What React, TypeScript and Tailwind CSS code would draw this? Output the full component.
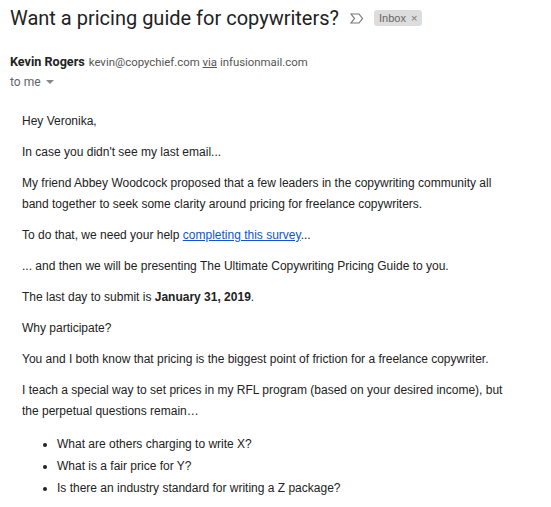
import React from "react";

const ImportantMarker: React.FC = () => (
  <svg width="14" height="11" viewBox="0 0 14 11" className="shrink-0">
    <path
      d="M1 1 H9 L12.5 5.5 L9 10 H1 L4.5 5.5 Z"
      fill="none"
      stroke="#777"
      strokeWidth="1.2"
      strokeLinejoin="miter"
    />
  </svg>
);

const App: React.FC = () => {
  return (
    <div className="w-[551px] h-[507px] bg-white overflow-hidden text-[#222]">
      {/* subject line */}
      <div className="flex items-center pl-[10px] h-[36px]">
        <h1 className="text-[20px] leading-[28px] text-[#222] font-['Roboto',sans-serif]">
          Want a pricing guide for copywriters?
        </h1>
        <div className="ml-[11px] mt-[1px]">
          <ImportantMarker />
        </div>
        <span className="ml-[10px] flex items-center gap-[5px] rounded-[3px] bg-[#ddd] px-[5px] h-[16px] text-[11px] text-[#666] font-['Liberation_Sans',Arial,sans-serif]">
          Inbox
          <span className="text-[11px] leading-none text-[#777]">×</span>
        </span>
      </div>

      {/* sender */}
      <div className="pl-[10px] pt-[18px] font-['Roboto',sans-serif]">
        <div className="flex items-baseline gap-[4px] text-[11.4px] leading-[16px]">
          <span className="text-[12.6px] font-bold text-[#222]">Kevin Rogers</span>
          <span className="text-[#555]">
            kevin@copychief.com <span className="underline">via</span> infusionmail.com
          </span>
        </div>
        <div className="mt-[2px] flex items-center gap-[5px] text-[12px] leading-[20px] text-[#5f6368]">
          to me
          <svg width="8" height="4" viewBox="0 0 8 4">
            <path d="M0 0 H8 L4 4 Z" fill="#888" />
          </svg>
        </div>
      </div>

      {/* body */}
      <div className="pl-[22px] pr-[42px] pt-[19px] text-[12px] leading-[21px] text-[#222] font-['Liberation_Sans',Arial,sans-serif] flex flex-col gap-[10px]">
        <p>Hey Veronika,</p>
        <p>In case you didn't see my last email...</p>
        <p>
          My friend Abbey Woodcock proposed that a few leaders in the copywriting community all band
          together to seek some clarity around pricing for freelance copywriters.
        </p>
        <p>
          To do that, we need your help{" "}
          <a href="#" className="text-[#15c] underline">
            completing this survey
          </a>
          ...
        </p>
        <p>... and then we will be presenting The Ultimate Copywriting Pricing Guide to you.</p>
        <p>
          The last day to submit is <b>January 31, 2019</b>.
        </p>
        <p>Why participate?</p>
        <p>You and I both know that pricing is the biggest point of friction for a freelance copywriter.</p>
        <p>
          I teach a special way to set prices in my RFL program (based on your desired income), but the
          perpetual questions remain…
        </p>
        <ul className="list-disc pl-[35px] pt-[1px] leading-[22px]">
          <li>What are others charging to write X?</li>
          <li>What is a fair price for Y?</li>
          <li>Is there an industry standard for writing a Z package?</li>
        </ul>
      </div>
    </div>
  );
};

export default App;
